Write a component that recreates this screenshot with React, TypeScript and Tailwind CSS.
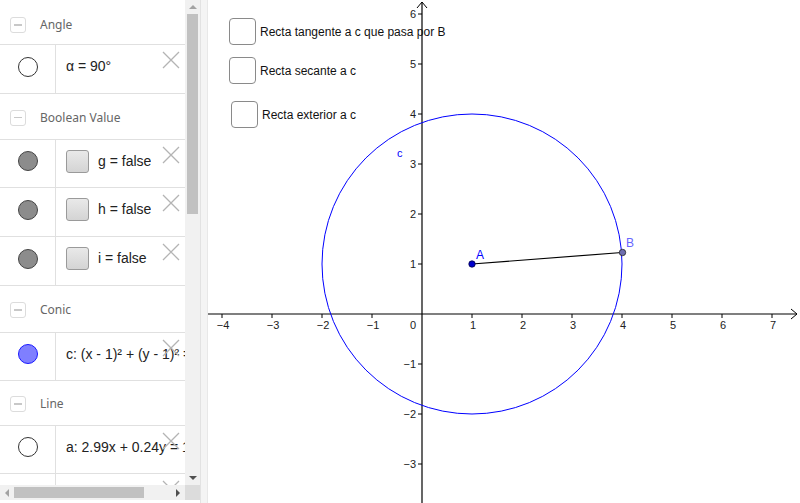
import React from "react";

const HEADER = "font-['Noto_Sans',sans-serif] text-[12px] text-[#666]";

function Collapse() {
  return (
    <div className="w-[16px] h-[16px] rounded-[3px] border border-[#dcdcdc] flex items-center justify-center bg-white">
      <div className="w-[8px] h-[1.5px] bg-[#c8c8c8]" />
    </div>
  );
}

function Header({ label, h, pt }: { label: string; h: string; pt: string }) {
  return (
    <div className={`flex items-center gap-[14px] pl-[10px] border-b border-[#e0e0e0] ${h} ${pt}`}>
      <Collapse />
      <span className={HEADER}>{label}</span>
    </div>
  );
}

function XIcon() {
  return (
    <svg width="18" height="18" viewBox="0 0 18 18" className="absolute right-[5px] top-[6px]">
      <path d="M1 1 L17 17 M17 1 L1 17" stroke="#b4b4b4" strokeWidth="1.3" />
    </svg>
  );
}

function Item({
  h,
  marker,
  children,
}: {
  h: string;
  marker: React.ReactNode;
  children: React.ReactNode;
}) {
  return (
    <div className={`relative flex border-b border-[#e0e0e0] ${h}`}>
      <div className="w-[56px] shrink-0 flex items-center justify-center border-r border-[#e0e0e0] pb-[5px]">
        {marker}
      </div>
      <div className="flex items-center pl-[10px] pb-[5px] gap-[9px] whitespace-nowrap overflow-hidden font-['Liberation_Sans',sans-serif] text-[14px] text-[#222]">
        {children}
      </div>
      <XIcon />
    </div>
  );
}

const Circ = ({ fill, border }: { fill: string; border: string }) => (
  <div
    className={`w-[20px] h-[20px] rounded-full border-[1.5px] ${fill} ${border}`}
  />
);

const Box = () => (
  <div className="w-[23px] h-[23px] rounded-[3px] border border-[#9a9a9a] bg-gradient-to-b from-[#e9e9e9] to-[#d4d4d4]" />
);

function LeftPanel() {
  return (
    <div className="w-[200px] h-[503px] flex flex-col shrink-0 bg-white">
      <div className="flex h-[485px]">
        <div className="w-[185px] overflow-hidden">
          <Header label="Angle" h="h-[45px]" pt="pt-[6px]" />
          <Item h="h-[49px]" marker={<Circ fill="bg-white" border="border-[#333]" />}>
            <span>α = 90°</span>
          </Item>
          <Header label="Boolean Value" h="h-[46px]" pt="pt-[2px]" />
          <Item h="h-[48px]" marker={<Circ fill="bg-[#8c8c8c]" border="border-[#444]" />}>
            <Box />
            <span>g = false</span>
          </Item>
          <Item h="h-[49px]" marker={<Circ fill="bg-[#8c8c8c]" border="border-[#444]" />}>
            <Box />
            <span>h = false</span>
          </Item>
          <Item h="h-[49px]" marker={<Circ fill="bg-[#8c8c8c]" border="border-[#444]" />}>
            <Box />
            <span>i = false</span>
          </Item>
          <Header label="Conic" h="h-[47px]" pt="pt-[2px]" />
          <Item h="h-[48px]" marker={<Circ fill="bg-[#7f7fff]" border="border-[#1a1aff]" />}>
            <span>c: (x - 1)² + (y - 1)² = 9</span>
          </Item>
          <Header label="Line" h="h-[45px]" pt="pt-[2px]" />
          <Item h="h-[48px]" marker={<Circ fill="bg-white" border="border-[#333]" />}>
            <span>a: 2.99x + 0.24y = 12.23</span>
          </Item>
          <Item h="h-[48px]" marker={<span />}>
            <span>b: x = 4</span>
          </Item>
        </div>
        <div className="w-[15px] bg-[#f1f1f1] flex flex-col items-center">
          <div className="h-[14px] flex items-center justify-center">
            <div className="w-0 h-0 border-l-[4px] border-r-[4px] border-b-[4px] border-l-transparent border-r-transparent border-b-[#a3a3a3]" />
          </div>
          <div className="w-[11px] h-[200px] bg-[#c1c1c1]" />
          <div className="flex-1" />
          <div className="h-[14px] flex items-center justify-center">
            <div className="w-0 h-0 border-l-[4px] border-r-[4px] border-t-[4px] border-l-transparent border-r-transparent border-t-[#505050]" />
          </div>
        </div>
      </div>
      <div className="flex h-[18px]">
        <div className="w-[185px] h-[15px] bg-[#f1f1f1] flex items-center">
          <div className="w-[14px] flex items-center justify-center">
            <div className="w-0 h-0 border-t-[4px] border-b-[4px] border-r-[4px] border-t-transparent border-b-transparent border-r-[#a3a3a3]" />
          </div>
          <div className="w-[130px] h-[11px] bg-[#c1c1c1]" />
          <div className="flex-1" />
          <div className="w-[14px] flex items-center justify-center">
            <div className="w-0 h-0 border-t-[4px] border-b-[4px] border-l-[4px] border-t-transparent border-b-transparent border-l-[#505050]" />
          </div>
        </div>
        <div className="w-[15px] h-[15px] bg-[#dcdcdc]" />
      </div>
    </div>
  );
}

function Graph() {
  const ox = 422;
  const oy = 314;
  const u = 50;
  const xs = [-4, -3, -2, -1, 1, 2, 3, 4, 5, 6, 7];
  const ys = [6, 5, 4, 3, 2, 1, -1, -2, -3];
  return (
    <svg width="592" height="503" className="block">
      <g transform="translate(-208,0)" fontFamily="'Liberation Sans', Arial, sans-serif" fontSize="11">
        <line x1="208" y1={oy} x2="797" y2={oy} stroke="#000" strokeWidth="1.2" />
        <path d={`M791 ${oy - 5} L797 ${oy} L791 ${oy + 5}`} fill="none" stroke="#000" strokeWidth="1" />
        <line x1={ox} y1="2" x2={ox} y2="503" stroke="#000" strokeWidth="1.2" />
        <path d={`M${ox - 5} 8 L${ox} 2 L${ox + 5} 8`} fill="none" stroke="#000" strokeWidth="1" />
        {xs.map((v) => {
          const x = ox + v * u;
          return (
            <g key={"x" + v}>
              <line x1={x} y1={oy} x2={x} y2={oy + 4} stroke="#000" strokeWidth="1" />
              <text x={x + 1} y={oy + 15} textAnchor="middle" fill="#222">
                {v < 0 ? "\u2212" + -v : v}
              </text>
            </g>
          );
        })}
        {ys.map((v) => {
          const y = oy - v * u;
          return (
            <g key={"y" + v}>
              <line x1={ox - 4} y1={y} x2={ox} y2={y} stroke="#000" strokeWidth="1" />
              <text x={ox - 6} y={y + 4} textAnchor="end" fill="#222">
                {v < 0 ? "\u2212" + -v : v}
              </text>
            </g>
          );
        })}
        <text x={ox - 6} y={oy + 15} textAnchor="end" fill="#222">0</text>
        <circle cx={472} cy={264} r={150} fill="none" stroke="#0000ff" strokeWidth="1" />
        <text x="397" y="157" fill="#0000ff" fontSize="11">c</text>
        <line x1="472" y1="264" x2="622" y2="252.5" stroke="#000" strokeWidth="1.2" />
        <circle cx="472" cy="264" r="3.2" fill="#0000cc" stroke="#000044" strokeWidth="0.8" />
        <circle cx="622.5" cy="252.5" r="3.2" fill="#6f6fb0" stroke="#222" strokeWidth="0.8" />
        <text x="476" y="259" fill="#0000ff" fontSize="12">A</text>
        <text x="626" y="247" fill="#6666ff" fontSize="12">B</text>
      </g>
    </svg>
  );
}

function CheckRow({ label, top, left }: { label: string; top: string; left: string }) {
  return (
    <div className={`absolute flex items-center gap-[4px] ${top} ${left}`}>
      <div className="w-[27px] h-[27px] rounded-[4px] border-[1.5px] border-[#8a8a8a] bg-white" />
      <span className="font-['Liberation_Sans',Arial,sans-serif] text-[12px] text-[#111]">{label}</span>
    </div>
  );
}

export default function App() {
  return (
    <div className="w-[800px] h-[503px] flex overflow-hidden bg-white">
      <LeftPanel />
      <div className="w-[8px] h-[503px] bg-[#f4f4f4] border-l border-[#e2e2e2] border-r border-r-[#e8e8e8]" />
      <div className="relative flex-1 h-[503px] bg-white">
        <Graph />
        <CheckRow label="Recta tangente a c que pasa por B" top="top-[18px]" left="left-[21px]" />
        <CheckRow label="Recta secante a c" top="top-[57px]" left="left-[21px]" />
        <CheckRow label="Recta exterior a c" top="top-[101px]" left="left-[23px]" />
      </div>
    </div>
  );
}
